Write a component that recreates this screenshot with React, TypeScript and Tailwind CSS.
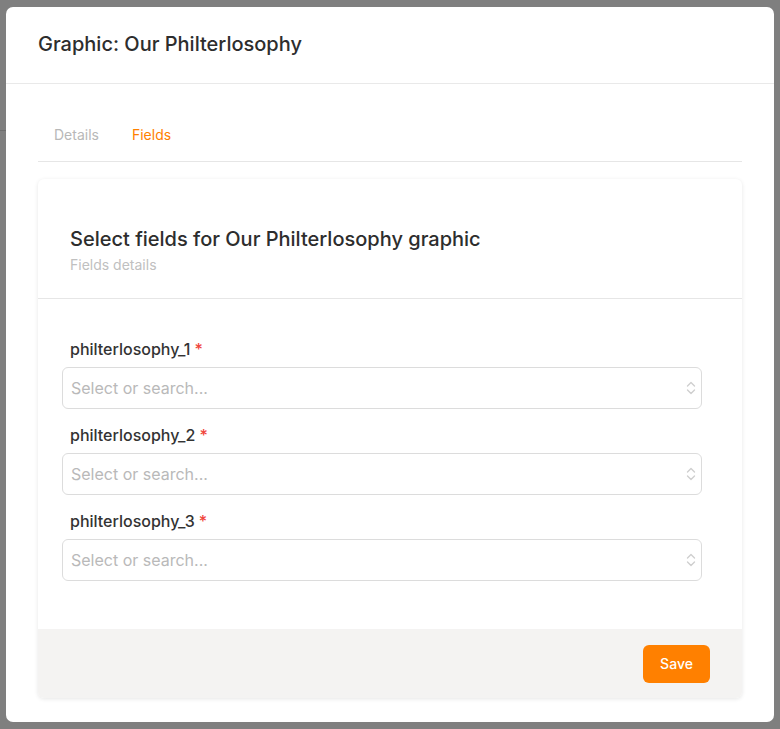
import React, { useState } from "react";

interface FieldObj {
  name: string;
  required: boolean;
}

const fields: FieldObj[] = [
  { name: "philterlosophy_1", required: true },
  { name: "philterlosophy_2", required: true },
  { name: "philterlosophy_3", required: true },
];

const SelectArrows = () => (
  <svg width="10" height="16" viewBox="0 0 10 16" fill="none" className="text-[#cfcfcf]">
    <path d="M1.5 6 L5 2.5 L8.5 6" stroke="currentColor" strokeWidth="1.4" strokeLinecap="round" strokeLinejoin="round" />
    <path d="M1.5 10 L5 13.5 L8.5 10" stroke="currentColor" strokeWidth="1.4" strokeLinecap="round" strokeLinejoin="round" />
  </svg>
);

const SelectField = ({ field }: { field: FieldObj }) => (
  <div className="flex flex-col">
    <label className="pl-2 mb-[7px] text-[16px] font-medium text-[#333] leading-[22px]">
      {field.name}
      {field.required && <span className="text-[#f0443a] ml-1">*</span>}
    </label>
    <div className="h-[42px] flex items-center justify-between rounded-[6px] border border-[#dcdcdc] bg-white pl-2 pr-[5px]">
      <span className="text-[16px] text-[#b9b9b9]">Select or search...</span>
      <SelectArrows />
    </div>
  </div>
);

const App = () => {
  const [tab, setTab] = useState("fields");

  return (
    <div
      className="relative w-[780px] h-[729px] overflow-hidden bg-white"
      style={{ fontFamily: "Inter, 'Noto Sans', sans-serif" }}
    >
      {/* page behind the modal */}
      <div className="pt-[130px]">
        <div className="border-t border-[#ddd] w-[40px]" />
      </div>

      <div className="absolute inset-0 bg-black/50 flex items-start justify-center pt-[7px]">
        <div className="w-[768px] h-[715px] bg-white rounded-[7px] flex flex-col">
          <div className="h-[77px] flex items-center px-8 border-b border-[#e9e9e9]">
            <h2 className="text-[20px] font-medium text-[#2d2d2d] -mt-[3px]">Graphic: Our Philterlosophy</h2>
          </div>

          <div className="px-8 pt-[26px]">
            <div className="flex gap-8 px-4 border-b border-[#e6e6e6] h-[52px] items-center">
              <button
                className={`text-[14px] -mt-[3px] ${tab === "details" ? "text-[#ff8000]" : "text-[#b8b8b8]"}`}
                onClick={() => setTab("details")}
              >
                Details
              </button>
              <button
                className={`text-[14px] -mt-[3px] ml-[1px] ${tab === "fields" ? "text-[#ff8000]" : "text-[#b8b8b8]"}`}
                onClick={() => setTab("fields")}
              >
                Fields
              </button>
            </div>

            <div className="mt-[17px] rounded-[6px] bg-white shadow-[0_1px_4px_rgba(0,0,0,0.1)] overflow-hidden">
              <div className="px-8 pt-[46px] pb-[23px] border-b border-[#e6e6e6]">
                <h3 className="text-[20px] font-medium text-[#2d2d2d] leading-[28px]">
                  Select fields for Our Philterlosophy graphic
                </h3>
                <p className="text-[14px] text-[#c0c0c0] mt-[1px]">Fields details</p>
              </div>

              <div className="pl-6 pr-10 pt-[39px] pb-[48px] flex flex-col gap-[15px]">
                {fields.map((f) => (
                  <SelectField key={f.name} field={f} />
                ))}
              </div>

              <div className="bg-[#f4f3f2] h-[69px] flex items-center justify-end px-8">
                <button className="h-[38px] w-[67px] rounded-[6px] bg-[#ff8000] text-white text-[14px] font-medium">
                  Save
                </button>
              </div>
            </div>
          </div>
        </div>
      </div>
    </div>
  );
};

export default App;
